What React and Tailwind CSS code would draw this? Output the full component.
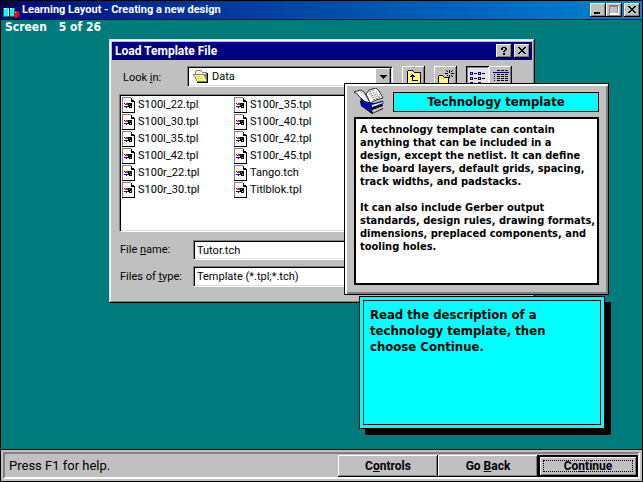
import { useState } from 'react';

const FILES = [
    'S100l_22.tpl', 'S100l_30.tpl', 'S100l_35.tpl', 'S100l_42.tpl', 'S100r_22.tpl', 'S100r_30.tpl',
    'S100r_35.tpl', 'S100r_40.tpl', 'S100r_42.tpl', 'S100r_45.tpl', 'Tango.tch', 'Titlblok.tpl',
];

// Classic bevels
const raised = 'bg-[#c0c0c0] shadow-[inset_-1px_-1px_0_#000,inset_1px_1px_0_#fff,inset_-2px_-2px_0_#808080]';
const frame = 'bg-[#c0c0c0] shadow-[inset_-1px_-1px_0_#000,inset_1px_1px_0_#dfdfdf,inset_-2px_-2px_0_#808080,inset_2px_2px_0_#fff]';
const sunken = 'bg-white border border-t-[#808080] border-l-[#808080] border-b-white border-r-white shadow-[inset_1px_1px_0_#000,inset_-1px_-1px_0_#dfdfdf]';

function AppIcon() {
    return (
        <svg className="w-4 h-4 shrink-0" viewBox="0 0 16 16" shapeRendering="crispEdges">
            <path d="M2 0h2v1h1v2H4v1H2V3H1V1h1zM5 2h2v1H5zM8 0h3v1H9v2h2v1H8zM12 0h3v1h-2v1h2v2h-3V3h2V2h-2zM0 5h13v1H0z" fill="#000" />
            <path d="M0 6h12v9H0z" fill="#008080" />
            <path d="M1 6h5v8H1zM7 6h4v8H7z" fill="#0ff" />
            <path d="M1 6h2v1H1zM7 6h2v1H7zM6 7h1v8H6zM5 7h1v7H5z" fill="#fff" />
            <path d="M0 15h2v1H0zM4 15h3v1H4zM8 15h3v1H8zM6 6h1v9H6z" fill="#000" />
            <path d="M12 9h3v1h1v4h-1v1h-1v1h-2v-1h-1v-5h1z" fill="#f00" />
            <path d="M12 6h1v2h1v1h-2z" fill="#000" />
            <path d="M12 10h1v1h-1z" fill="#fff" />
        </svg>
    );
}

function FolderIcon() {
    return (
        <svg className="absolute left-[6px] top-1 w-4 h-[13px] pointer-events-none" viewBox="0 0 16 13" shapeRendering="crispEdges">
            <path d="M3 0h5v1h1v1h5v10H4v-1H3V9H2V7H1V6H0V4h2V1h1z" fill="#808080" />
            <path d="M3 1h5v1h1v1h4v1H3z" fill="#ffffb0" />
            <path d="M1 5h10v2h1v2h1v2H4V9H3V7H2V6H1z" fill="#ffffa0" />
            <path d="M14 3h1v10H4v-1h10z" fill="#000" />
            <path d="M4 6h1v1H4zM6 6h1v1H6zM8 6h1v1H8zM5 8h1v1H5zM7 8h1v1H7zM9 8h1v1H9zM6 10h1v1H6zM8 10h1v1H8zM10 10h1v1h-1z" fill="#f0e000" />
        </svg>
    );
}

function FileIcon() {
    return (
        <svg className="w-[13px] h-4 shrink-0" viewBox="0 0 13 16" shapeRendering="crispEdges">
            <path d="M0 0h9v1h1v1h1v1h1v1h1v12H0z" fill="#808080" />
            <path d="M1 1h8v3h3v11H1z" fill="#fff" />
            <path d="M9 1h1v2h2v1h1v12H0v-1h12V5H9z" fill="#000" />
            <path d="M10 2h1v1h-1z" fill="#fff" />
            <path d="M2 6h1v1H2zM2 9h1v1H2zM6 6h4v5H7v-1H6z" fill="#000" />
            <path d="M3 7h1V6h2v2H3z" fill="#f00" />
            <path d="M7 7h1v1H7z" fill="#00a000" />
            <path d="M3 9h3v1H5v1H4v-1H3z" fill="#00f" />
            <path d="M8 9h1v1H8z" fill="#e0d000" />
        </svg>
    );
}

function UpFolderIcon() {
    return (
        <svg className="w-4 h-4" viewBox="0 0 16 16" shapeRendering="crispEdges">
            <path d="M2 1h5v1h1v1h7v12H1V2h1z" fill="#000" />
            <path d="M2 2h5v1h1v1h6v10H2z" fill="#ffff66" />
            <path d="M6 5h1v1h1v1h1v1H7v3h5v1H6V8H4V7h1V6h1z" fill="#000" />
        </svg>
    );
}

function NewFolderIcon() {
    return (
        <svg className="w-4 h-4" viewBox="0 0 16 16" shapeRendering="crispEdges">
            <path d="M1 6h4v1h1v1h5v8H0V7h1z" fill="#000" />
            <path d="M1 7h4v1h1v1h4v6H1z" fill="#ffff66" />
            <path d="M11 1h1v3h-1zM11 6h1v3h-1zM7 4h3v1H7zM13 4h3v1h-3zM8 1h1v1H8zM9 2h1v1H9zM14 1h1v1h-1zM13 2h1v1h-1zM9 6h1v1H9zM13 6h1v1h-1zM14 7h1v1h-1z" fill="#000" />
        </svg>
    );
}

function ListIcon() {
    return (
        <svg className="w-4 h-4" viewBox="0 0 16 16" shapeRendering="crispEdges">
            {[3, 8, 13].map((y) => [0, 8].map((x) => (
                <g key={`${x}-${y}`}>
                    <path d={`M${x} ${y}h3v3h-3zM${x + 1} ${y + 1}v1h1v-1z`} fill="#000080" fillRule="evenodd" />
                    <path d={`M${x + 4} ${y + 1}h3v1h-3z`} fill="#000" />
                </g>
            )))}
        </svg>
    );
}

function DetailsIcon() {
    return (
        <svg className="w-4 h-4" viewBox="0 0 16 16" shapeRendering="crispEdges">
            <path d="M4 1h3v1H4zM8 1h3v1H8zM12 1h3v1h-3z" fill="#000" />
            <path d="M0 3h16v1H0zM1 5h1v1H1zM1 7h1v1H1zM1 9h1v1H1zM1 11h1v1H1z" fill="#000080" />
            <path d="M4 5h3v1H4zM8 5h3v1H8zM12 5h3v1h-3zM4 7h3v1H4zM8 7h3v1H8zM12 7h3v1h-3zM4 9h3v1H4zM8 9h3v1H8zM12 9h3v1h-3zM4 11h3v1H4zM8 11h3v1H8zM12 11h3v1h-3z" fill="#000" />
        </svg>
    );
}

function BookIcon() {
    return (
        <svg className="w-[30px] h-[27px] shrink-0" viewBox="0 0 30 27">
            {/* closed lower volume */}
            <path d="M6 13l1 5 11 8 11-5v-4z" fill="#000" />
            <path d="M7 14l11 7v3L8 18z" fill="#0000e0" />
            <path d="M18 22l11-4v2l-10 5z" fill="#c0c0c0" />
            <path d="M7 9v4l11 7 11-4v-3l-11 3z" fill="#0000ff" stroke="#000" strokeWidth="0.6" />
            <path d="M18 17l11-3v1l-11 4z" fill="#fff" />
            {/* open pages */}
            <path d="M12 6l3-4 7-2 3 3 4 7-7 2-6 3z" fill="#fff" stroke="#000" strokeWidth="0.8" />
            <path d="M0 4l7-2 3 2 3 5 3 6-6-2-4-4-3-3z" fill="#fff" stroke="#000" strokeWidth="0.8" />
            <path d="M15 4l6-2M16 6l7-2M17 8l7-2M18 10l8-2M19 12l8-3" stroke="#555" strokeWidth="0.8" strokeDasharray="2 1" fill="none" />
            <path d="M7 4l4 3 3 5" stroke="#aaa" strokeWidth="0.8" fill="none" />
        </svg>
    );
}

function WinButton({ label, children }) {
    return (
        <button aria-label={label} className={`${raised} w-4 h-[14px] flex items-center justify-center`}>
            <svg className="w-[10px] h-[10px]" viewBox="0 0 10 10" shapeRendering="crispEdges">{children}</svg>
        </button>
    );
}

const crossPath = 'M1 1h2v1h1v1h2V2h1V1h2v1H8v1H7v1H6v1h1v1h1v1h1v1H7V7H6V6H4v1H3v1H1V7h1V6h1V5h1V4H3V3H2V2H1z';

function ToolButton({ label, pressed, children }) {
    return (
        <button
            aria-label={label}
            className={`w-[23px] h-[22px] flex items-center justify-center ${pressed
                ? 'bg-[#e4e4e4] shadow-[inset_1px_1px_0_#000,inset_-1px_-1px_0_#fff,inset_2px_2px_0_#808080]'
                : raised}`}
        >
            {children}
        </button>
    );
}

function LoadDialog() {
    const [fileName, setFileName] = useState('Tutor.tch');

    return (
        <section className={`${frame} absolute left-[108px] top-[19px] w-[426px] p-[3px] pb-4 text-[11px] leading-[14px]`}>
            <header className="h-[18px] pl-[3px] pr-[2px] flex items-center bg-[#000080] text-white font-bold">
                <h2 className="flex-1 text-[12px]">Load Template File</h2>
                <div className="flex gap-[2px]">
                    <WinButton label="Help">
                        <path d="M3 1h4v1h1v2H7v1H6v1H4V5h1V4h1V2H4v2H2V2h1zM4 7h2v2H4z" fill="#000" />
                    </WinButton>
                    <WinButton label="Close dialog"><path d={crossPath} fill="#000" /></WinButton>
                </div>
            </header>

            <div className="px-[7px] pt-[6px]">
                <div className="h-[21px] flex items-center gap-[9px]">
                    <div className="flex items-center">
                        <label htmlFor="look-in" className="w-[68px] pl-1 pt-[2px]">Look <u>i</u>n:</label>
                        <div className="relative">
                            <select id="look-in" className={`${sunken} block w-[206px] h-[21px] pl-6 appearance-none`}>
                                <option>Data</option>
                            </select>
                            <FolderIcon />
                            <span className={`${raised} absolute right-[2px] top-[2px] w-4 h-[17px] flex items-center justify-center pointer-events-none`}>
                                <svg className="w-[7px] h-1" viewBox="0 0 7 4" shapeRendering="crispEdges"><path d="M0 0h7v1H6v1H5v1H4v1H3V3H2V2H1V1H0z" /></svg>
                            </span>
                        </div>
                    </div>
                    <ToolButton label="Up one level"><UpFolderIcon /></ToolButton>
                    <ToolButton label="Create new folder"><NewFolderIcon /></ToolButton>
                    <div className="flex">
                        <ToolButton label="List" pressed><ListIcon /></ToolButton>
                        <ToolButton label="Details"><DetailsIcon /></ToolButton>
                    </div>
                </div>

                <ul className={`${sunken} mt-[7px] h-[138px] pt-px px-[2px] grid grid-flow-col grid-rows-[repeat(6,17px)] auto-cols-[112px]`}>
                    {FILES.map((file) => (
                        <li key={file} className="flex items-center gap-[3px]">
                            <FileIcon />
                            {file}
                        </li>
                    ))}
                </ul>

                <div className="mt-2 flex items-center">
                    <label htmlFor="file-name" className="w-[74px] pl-px">File <u>n</u>ame:</label>
                    <input
                        id="file-name"
                        value={fileName}
                        onChange={(e) => setFileName(e.target.value)}
                        className={`${sunken} h-5 w-[220px] px-[3px]`}
                    />
                </div>
                <div className="mt-[6px] flex items-center">
                    <label htmlFor="file-type" className="w-[74px] pl-px">Files of <u>t</u>ype:</label>
                    <select id="file-type" className={`${sunken} h-[21px] w-[220px] px-[3px] appearance-none`}>
                        <option>Template (*.tpl;*.tch)</option>
                    </select>
                </div>
            </div>
        </section>
    );
}

function TopicPopup() {
    return (
        <aside className="absolute left-[343px] top-[63px] w-[265px] border border-black bg-[#c0c0c0] shadow-[inset_2px_2px_0_#fff,inset_-2px_-2px_0_#808080] pt-2 px-[9px] pb-[9px] font-['DejaVu_Sans_Condensed',sans-serif] font-bold">
            <div className="flex items-start gap-[9px]">
                <div className="-mt-1"><BookIcon /></div>
                <h2 className="flex-1 h-5 border border-black bg-[#00ffff] text-center text-[13px] leading-[18px]">Technology template</h2>
            </div>
            <div className="mt-[2px] min-h-[168px] border-2 border-black bg-white pt-1 pl-1 text-[11px] leading-[13px]">
                <p>A technology template can contain<br />anything that can be included in a<br />design, except the netlist. It can define<br />the board layers, default grids, spacing,<br />track widths, and padstacks.</p>
                <p className="mt-[13px]">It can also include Gerber output<br />standards, design rules, drawing formats,<br />dimensions, preplaced components, and<br />tooling holes.</p>
            </div>
        </aside>
    );
}

function Instruction() {
    return (
        <aside className="absolute left-[358px] top-[276px] w-[246px] border border-black bg-[#00ffff] p-[3px] shadow-[6px_6px_0_#000]">
            <p className="min-h-[125px] border border-black px-[6px] py-[6px] font-['DejaVu_Sans_Condensed',sans-serif] font-bold text-[13px] leading-4">
                Read the description of a<br />technology template, then<br />choose Continue.
            </p>
        </aside>
    );
}

export default function App() {
    return (
        <div className="h-screen flex flex-col border border-black bg-[#007b7b] text-black font-[Roboto,sans-serif] overflow-hidden">
            <header className="h-[18px] shrink-0 pl-[2px] pr-[2px] flex items-center gap-[3px] bg-linear-to-r from-[#000080] to-[#0a84d0] text-white">
                <AppIcon />
                <h1 className="flex-1 text-[11px] font-bold">Learning Layout - Creating a new design</h1>
                <div className="flex">
                    <WinButton label="Minimize"><path d="M1 7h6v2H1z" fill="#000" /></WinButton>
                    <WinButton label="Maximize">
                        <path d="M0 0h9v9H0zM1 2v6h7V2z" fill="#808080" fillRule="evenodd" />
                        <path d="M1 8h8V1h1v9H1z" fill="#fff" />
                    </WinButton>
                    <div className="ml-[2px] flex">
                        <WinButton label="Close"><path d={crossPath} fill="#000" /></WinButton>
                    </div>
                </div>
            </header>

            <main className="relative flex-1 border-t border-black">
                <p className="pl-1 flex gap-3 text-white text-[12px] leading-[14px] font-bold font-['DejaVu_Sans_Condensed',sans-serif]">
                    <span>Screen</span><span>5 of 26</span>
                </p>
                <LoadDialog />
                <TopicPopup />
                <Instruction />
            </main>

            <footer className="h-8 shrink-0 p-[2px] border-t border-black bg-[#c0c0c0]">
                <div className="h-full pl-1 flex items-center border-t-2 border-l-2 border-t-[#808080] border-l-[#808080] border-b-2 border-r-2 border-b-white border-r-white">
                    <p className="flex-1 text-[13px]">Press F1 for help.</p>
                    <div className="flex text-[12px] font-bold">
                        <button className={`${raised} w-[100px] h-[22px]`}>C<u>o</u>ntrols</button>
                        <button className={`${raised} w-[100px] h-[22px]`}>Go <u>B</u>ack</button>
                        <button className="w-[100px] h-[22px] p-[3px] border-2 border-black bg-[#c0c0c0] shadow-[inset_1px_1px_0_#fff,inset_-1px_-1px_0_#808080] flex">
                            <span className="flex-1 self-stretch flex items-center justify-center border border-dotted border-black"><span>Co<u>n</u>tinue</span></span>
                        </button>
                    </div>
                </div>
            </footer>
        </div>
    );
}
